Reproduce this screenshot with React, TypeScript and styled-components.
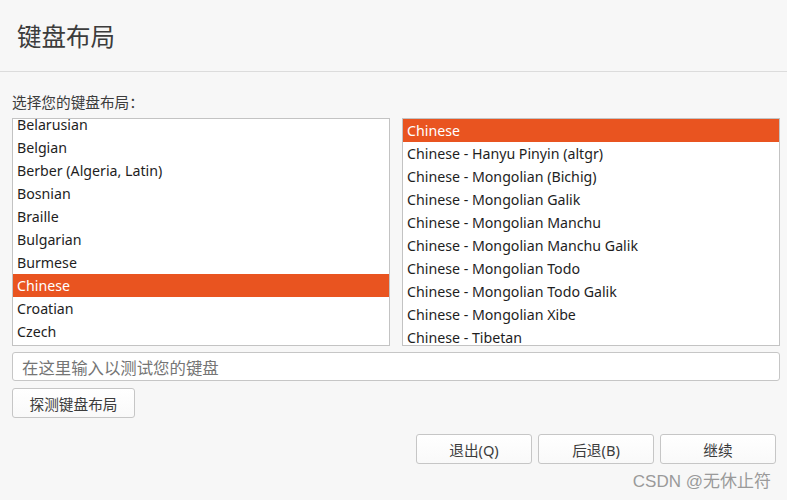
import React from 'react';
import styled, { createGlobalStyle } from 'styled-components';

const GlobalStyle = createGlobalStyle`
  html, body {
    margin: 0;
    padding: 0;
    background: #f7f7f7;
  }

  body {
    font-family: 'Noto Sans', 'Noto Sans CJK SC', sans-serif;
    color: #3c3c3c;
  }
`;

const leftLayouts = [
  'Belarusian',
  'Belgian',
  'Berber (Algeria, Latin)',
  'Bosnian',
  'Braille',
  'Bulgarian',
  'Burmese',
  'Chinese',
  'Croatian',
  'Czech',
];

const rightVariants = [
  'Chinese',
  'Chinese - Hanyu Pinyin (altgr)',
  'Chinese - Mongolian (Bichig)',
  'Chinese - Mongolian Galik',
  'Chinese - Mongolian Manchu',
  'Chinese - Mongolian Manchu Galik',
  'Chinese - Mongolian Todo',
  'Chinese - Mongolian Todo Galik',
  'Chinese - Mongolian Xibe',
  'Chinese - Tibetan',
];

export default function App() {
  return (
    <Page>
      <GlobalStyle />
      <Header>
        <Title>键盘布局</Title>
      </Header>

      <Content>
        <Label>选择您的键盘布局：</Label>

        <ListsRow>
          <ListBox>
            {/* 左侧列表已经向下滚动了一点 */}
            <ListScroll offset={6}>
              {leftLayouts.map((item) => (
                <Row key={item} selected={item === 'Chinese'}>
                  {item}
                </Row>
              ))}
            </ListScroll>
          </ListBox>
          <ListBox>
            <ListScroll offset={0}>
              {rightVariants.map((item, index) => (
                <Row key={item} selected={index === 0}>
                  {item}
                </Row>
              ))}
            </ListScroll>
          </ListBox>
        </ListsRow>

        <TestInput placeholder="在这里输入以测试您的键盘" />

        <DetectButton>探测键盘布局</DetectButton>

        <ActionBar>
          <ActionButton>退出(Q)</ActionButton>
          <ActionButton>后退(B)</ActionButton>
          <ActionButton>继续</ActionButton>
        </ActionBar>
      </Content>

      <Watermark>CSDN @无休止符</Watermark>
    </Page>
  );
}

const Page = styled.div`
  position: relative;
  width: 787px;
  height: 500px;
  overflow: hidden;
  background: #f7f7f7;
`;

const Header = styled.header`
  display: flex;
  align-items: center;

  height: 72px;
  padding-left: 17px;

  border-bottom: 1px solid #dcdcdc;
  box-sizing: border-box;
`;

const Title = styled.h1`
  margin: 0;

  font-family: 'Noto Sans CJK SC', sans-serif;
  font-size: 24.5px;
  font-weight: 400;
  line-height: 32px;
  color: #3c3c3c;
`;

const Content = styled.main`
  display: flex;
  flex-direction: column;

  padding: 20px 7px 0 12px;
`;

const Label = styled.div`
  font-family: 'Noto Sans CJK SC', sans-serif;
  font-size: 14.67px;
  line-height: 20px;
  color: #3c3c3c;

  margin-bottom: 6px;
`;

const ListsRow = styled.div`
  display: grid;
  grid-template-columns: 378px 378px;
  gap: 12px;
`;

const ListBox = styled.div`
  height: 228px;
  overflow: hidden;

  background: #ffffff;
  border: 1px solid #c3c3c3;
  box-sizing: border-box;
`;

const ListScroll = styled.div<{ offset: number }>`
  margin-top: ${(p) => -p.offset}px;
`;

const Row = styled.div<{ selected?: boolean }>`
  height: 23px;
  padding-left: 4px;

  font-size: 14.2px;
  line-height: 23px;
  white-space: nowrap;

  color: ${(p) => (p.selected ? '#ffffff' : '#1e1e1e')};
  background: ${(p) => (p.selected ? '#e95420' : 'transparent')};
`;

const TestInput = styled.input`
  all: unset;

  height: 29px;
  margin-top: 6px;
  padding: 0 9px;

  background: #ffffff;
  border: 1px solid #c6c6c6;
  border-radius: 3px;
  box-sizing: border-box;

  font-family: 'Noto Sans CJK SC', sans-serif;
  font-size: 16.4px;
  color: #3c3c3c;

  ::placeholder {
    color: #8c8c8c;
  }
`;

const ButtonBase = styled.button`
  height: 30px;
  padding: 0;

  background: linear-gradient(#ffffff, #f9f9f9);
  border: 1px solid #c6c6c6;
  border-radius: 3px;
  box-sizing: border-box;

  font-family: 'Noto Sans', 'Noto Sans CJK SC', sans-serif;
  font-size: 14.67px;
  color: #3c3c3c;
`;

const DetectButton = styled(ButtonBase)`
  align-self: flex-start;

  width: 123px;
  margin-top: 7px;
`;

const ActionBar = styled.div`
  display: flex;
  justify-content: flex-end;
  gap: 6px;

  margin-top: 16px;
  padding-right: 4px;
`;

const ActionButton = styled(ButtonBase)`
  width: 116px;
`;

const Watermark = styled.div`
  position: absolute;
  right: 16px;
  bottom: 8px;

  font-family: 'Liberation Sans', 'Noto Sans CJK SC', sans-serif;
  font-size: 17px;
  color: #9a9a9a;
`;
